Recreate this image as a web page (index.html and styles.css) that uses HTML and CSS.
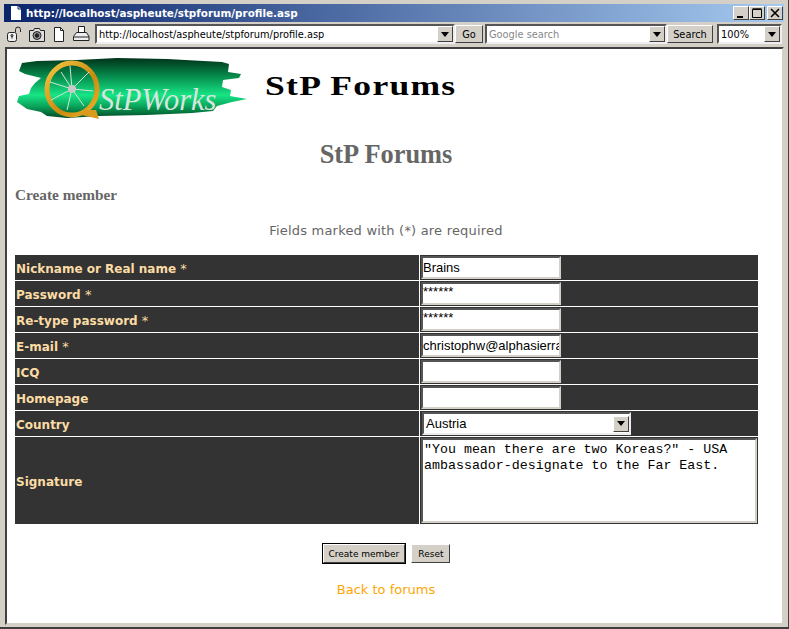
FILE: index.html
```html
<!DOCTYPE html>
<html lang="en">
<head>
  <meta charset="UTF-8">
  <title>StP Forums</title>
  <link rel="stylesheet" href="styles.css">
</head>
<body>

<div class="window">
  <div class="titlebar">
    <svg class="title-icon" width="16" height="16" viewBox="0 0 16 16"><path d="M3 1h7l3 3v11H3z" fill="#fff"/><path d="M10 1v3h3" fill="none" stroke="#0a246a"/></svg>
    <span class="title-text">http://localhost/aspheute/stpforum/profile.asp</span>
    <div class="win-buttons">
      <div class="win-btn"><svg width="10" height="10" viewBox="0 0 10 10"><path d="M1 8h6v2H1z" fill="#000"/></svg></div>
      <div class="win-btn"><svg width="10" height="10" viewBox="0 0 10 10"><path d="M.5 1.5h9v8h-9zM.5.8h9" fill="none" stroke="#000"/></svg></div>
      <div class="win-btn close"><svg width="10" height="10" viewBox="0 0 10 10"><path d="M1 1l8 8M9 1l-8 8" stroke="#000" stroke-width="1.6"/></svg></div>
    </div>
  </div>

  <div class="toolbar">
    <div class="tool-icons">
      <svg width="18" height="18" viewBox="0 0 18 18" fill="none" stroke="#222"><rect x="1.500" y="7.500" width="9" height="9" rx="2" fill="#eee"/><path d="M6 10.500v3"/><circle cx="6" cy="10.500" r="1"/><path d="M9.500 7V4.500a2.500 2.500 0 0 1 5 0V7"/></svg>
      <svg width="18" height="18" viewBox="0 0 18 18" fill="none" stroke="#222"><path d="M1.500 5.500h4l1-2h5l1 2h4v11h-15z" fill="#ddd"/><circle cx="9" cy="10.500" r="4" fill="#999"/><circle cx="9" cy="10.500" r="1.800" fill="#222"/></svg>
      <svg width="18" height="18" viewBox="0 0 18 18" fill="#fff" stroke="#222"><path d="M4.500 2.500h6l3 3v11h-9z"/><path d="M10.500 2.500v3h3" fill="none"/></svg>
      <svg width="18" height="18" viewBox="0 0 18 18" fill="#eee" stroke="#222"><path d="M6.500 1.500h6v6h-6z" fill="#fff"/><path d="M4.500 7.500h10l2.500 4v4H1.500v-4z"/><path d="M2 12h15"/></svg>
    </div>
    <div class="combo address">
      <span class="combo-text">http://localhost/aspheute/stpforum/profile.asp</span>
      <div class="arrow-btn"><i class="arrow"></i></div>
    </div>
    <div class="tool-btn go">Go</div>
    <div class="combo search">
      <span class="combo-text muted">Google search</span>
      <div class="arrow-btn"><i class="arrow"></i></div>
    </div>
    <div class="tool-btn find">Search</div>
    <div class="combo zoom">
      <span class="combo-text">100%</span>
      <div class="arrow-btn"><i class="arrow"></i></div>
    </div>
  </div>

  <div class="content">
    <div class="banner">
      <svg class="logo" width="232" height="64" viewBox="0 0 232 64">
        <defs>
          <linearGradient id="brush" x1="0" y1="0" x2="0" y2="1">
            <stop offset="0" stop-color="#00331a"/>
            <stop offset=".3" stop-color="#068a4c"/>
            <stop offset=".62" stop-color="#17e585"/>
            <stop offset=".8" stop-color="#0aa55c"/>
            <stop offset="1" stop-color="#004a24"/>
          </linearGradient>
          <linearGradient id="gold" x1="0" y1="0" x2="1" y2="1">
            <stop offset="0" stop-color="#f5c542"/>
            <stop offset=".6" stop-color="#c98a10"/>
            <stop offset="1" stop-color="#f0b52c"/>
          </linearGradient>
        </defs>
        <path d="M5 7 20 5 60 4 100 2 150 3 205 6 212 8 211 16 224 18 222 22 206 24 205 31 214 34 213 40 230 43 215 46 200 50 196 55 175 57 130 59 82 60 50 62 30 60 24 56 10 53 0 46 2 40 12 38 14 32 18 27 24 22 8 18 2 15z" fill="url(#brush)"/>
        <ellipse cx="55" cy="33" rx="25" ry="26" fill="none" stroke="url(#gold)" stroke-width="5"/>
        <path d="M60 58 82 63 79 54 68 54z" fill="#d99b1c"/>
        <path d="M55 33 44 16M55 33 72 16M55 33 34 44M55 33 67 50M55 33 76 35M55 33 53 10M55 33 50 54M55 33 33 26" stroke="#cfe6dc" stroke-width="1"/>
        <circle cx="55" cy="33" r="4" fill="#c9c9c9"/>
        <text class="logo-text" x="82" y="54">StPWorks</text>
      </svg>
      <svg class="wordmark" width="200" height="32" viewBox="0 0 200 32">
        <text class="wordmark-text" x="0" y="25" transform="scale(1.27 1)">StP Forums</text>
      </svg>
    </div>

    <h1 class="page-title">StP Forums</h1>
    <h2 class="section-title">Create member</h2>
    <p class="note">Fields marked with (*) are required</p>

    <table class="member-form">
      <tr>
        <td class="label">Nickname or Real name <span class="star">*</span></td>
        <td class="field"><input class="text-input" type="text" value="Brains"></td>
      </tr>
      <tr>
        <td class="label">Password <span class="star">*</span></td>
        <td class="field"><input class="text-input secret" type="text" value="******"></td>
      </tr>
      <tr>
        <td class="label">Re-type password <span class="star">*</span></td>
        <td class="field"><input class="text-input secret" type="text" value="******"></td>
      </tr>
      <tr>
        <td class="label">E-mail <span class="star">*</span></td>
        <td class="field"><input class="text-input" type="text" value="christophw@alphasierrapapa.com"></td>
      </tr>
      <tr>
        <td class="label">ICQ</td>
        <td class="field"><input class="text-input" type="text"></td>
      </tr>
      <tr>
        <td class="label">Homepage</td>
        <td class="field"><input class="text-input" type="text"></td>
      </tr>
      <tr>
        <td class="label">Country</td>
        <td class="field">
          <div class="combo country">
            <span class="combo-text">Austria</span>
            <div class="arrow-btn"><i class="arrow"></i></div>
          </div>
        </td>
      </tr>
      <tr class="tall">
        <td class="label">Signature</td>
        <td class="field"><textarea class="signature">"You mean there are two Koreas?" - USA ambassador-designate to the Far East.</textarea></td>
      </tr>
    </table>

    <div class="actions">
      <button class="form-btn primary">Create member</button>
      <button class="form-btn">Reset</button>
    </div>
    <a class="back-link" href="#">Back to forums</a>
  </div>
</div>

</body>
</html>
```

FILE: styles.css
```css
html, body {
  margin: 0;
  height: 100%;
}

body {
  background-color: #d4d0c8;
  overflow: hidden;
}

.window {
  box-sizing: border-box;
  height: 629px;
  padding: 4px 4px 2px 4px;
  border-bottom: 2px solid #404040;
  border-right: 1px solid #404040;
  display: flex;
  flex-direction: column;
}

/* title bar */
.titlebar {
  height: 18px;
  flex: none;
  display: flex;
  align-items: center;
  padding-left: 4px;
  background: linear-gradient(to right, #0a246a, #a6caf0);
}

.title-icon {
  flex: none;
  margin-right: 2px;
}

.title-text {
  font-family: "DejaVu Sans", sans-serif;
  font-size: 10.4px;
  font-weight: bold;
  color: #fff;
}

.win-buttons {
  margin-left: auto;
  margin-right: 1px;
  display: flex;
}

.win-btn {
  box-sizing: border-box;
  width: 16px;
  height: 14px;
  display: flex;
  align-items: center;
  justify-content: center;
  background-color: #d4d0c8;
  border: 1px solid;
  border-color: #fff #404040 #404040 #fff;
}

.win-btn.close {
  margin-left: 2px;
}

/* toolbar */
.toolbar {
  height: 22px;
  flex: none;
  margin-top: 1px;
  display: flex;
  align-items: center;
  font-family: "DejaVu Sans", sans-serif;
  font-size: 9.800px;
}

.tool-icons {
  width: 90px;
  flex: none;
  padding-left: 2px;
  box-sizing: border-box;
  display: flex;
  gap: 4px;
}

.combo {
  box-sizing: border-box;
  height: 20px;
  display: flex;
  align-items: center;
  background-color: #fff;
  border: 2px solid;
  border-color: #555 #eee #eee #555;
}

.combo-text {
  flex: 1;
  padding-left: 2px;
  white-space: nowrap;
  overflow: hidden;
}

.muted {
  color: #888;
}

.arrow-btn {
  box-sizing: border-box;
  width: 16px;
  height: 16px;
  flex: none;
  display: flex;
  align-items: center;
  justify-content: center;
  background-color: #d4d0c8;
  border: 1px solid;
  border-color: #fff #404040 #404040 #fff;
}

.arrow {
  width: 0;
  height: 0;
  border: 4px solid transparent;
  border-top: 5px solid #000;
  border-bottom: 0;
}

.address {
  width: 360px;
  margin-left: 1px;
}

.search {
  width: 182px;
  margin-left: 2px;
}

.zoom {
  width: 65px;
  margin-left: 4px;
}

.tool-btn {
  box-sizing: border-box;
  height: 18px;
  display: flex;
  align-items: center;
  justify-content: center;
  background-color: #d4d0c8;
  border: 1px solid;
  border-color: #fff #404040 #404040 #fff;
}

.go {
  width: 28px;
}

.find {
  width: 46px;
}

/* page */
.content {
  flex: 1;
  margin: 2px 0 0 1px;
  padding: 0 25px 0 8px;
  background-color: #fff;
  border: 2px solid;
  border-color: #404040 #d4d0c8 #d4d0c8 #404040;
  overflow: hidden;
}

.banner {
  height: 77px;
  display: flex;
  align-items: flex-start;
  padding-top: 7px;
  box-sizing: border-box;
}

.logo {
  flex: none;
  margin-left: 2px;
}

.logo-text {
  font-family: "Liberation Serif", serif;
  font-style: italic;
  font-size: 30.500px;
  fill: #d5e6dd;
}

.wordmark {
  flex: none;
  margin-left: 16px;
  margin-top: 14px;
}

.wordmark-text {
  font-family: "Liberation Serif", serif;
  font-weight: bold;
  font-size: 28px;
  letter-spacing: 1px;
  fill: #000;
}

.page-title {
  margin: 12px 0 0 0;
  font-family: "Liberation Serif", serif;
  font-size: 26.400px;
  line-height: 32px;
  color: #666;
  text-align: center;
}

.section-title {
  margin: 16px 0 0 0;
  font-family: "Liberation Serif", serif;
  font-size: 15.300px;
  line-height: 18px;
  color: #666;
}

.note {
  margin: 18px 0 0 0;
  font-family: "DejaVu Sans", sans-serif;
  font-size: 13px;
  line-height: 18px;
  letter-spacing: .2px;
  color: #666;
  text-align: center;
}

/* form table */
.member-form {
  width: 745px;
  margin: 14px 0 0 -1px;
  border-collapse: separate;
  border-spacing: 1px;
  table-layout: fixed;
}

.member-form tr {
  height: 25px;
}

.member-form tr.tall {
  height: 87px;
}

.label {
  width: 403px;
  padding: 2px 0 0 1px;
  background-color: #333;
  color: #fbdca5;
  font-family: "DejaVu Sans", sans-serif;
  font-size: 12px;
  font-weight: bold;
}

.star {
  font-weight: normal;
  font-size: 13px;
}

.field {
  padding: 0 0 0 1px;
  background-color: #333;
}

.text-input {
  display: block;
  box-sizing: border-box;
  width: 140px;
  height: 23px;
  margin: 0;
  padding: 0;
  background-color: #fff;
  border: 2px solid;
  border-color: #555 #d4d0c8 #d4d0c8 #555;
  font-family: "Liberation Sans", sans-serif;
  font-size: 13px;
  color: #000;
}

.secret {
  padding-bottom: 5px;
}

.country {
  width: 209px;
  height: 23px;
  margin-left: 1px;
  font-family: "Liberation Sans", sans-serif;
  font-size: 13px;
}

.country .combo-text {
  padding-left: 2px;
}

.signature {
  display: block;
  box-sizing: border-box;
  width: 336px;
  height: 85px;
  margin: 0;
  padding: 2px 0 2px 1px;
  resize: none;
  overflow: hidden;
  background-color: #fff;
  border: 2px solid;
  border-color: #555 #d4d0c8 #d4d0c8 #555;
  outline: 1px solid #333;
  font-family: "Liberation Mono", monospace;
  font-size: 13.300px;
  line-height: 16px;
  color: #000;
}

/* buttons */
.actions {
  margin-top: 19px;
  padding-left: 1px;
  display: flex;
  justify-content: center;
  gap: 6px;
}

.form-btn {
  height: 19px;
  padding: 0 6px;
  background-color: #d4d0c8;
  border: 1px solid;
  border-color: #fff #404040 #404040 #fff;
  font-family: "DejaVu Sans", sans-serif;
  font-size: 9px;
  color: #000;
}

.form-btn.primary {
  padding: 0 5px;
  outline: 1px solid #000;
}

.back-link {
  display: block;
  margin-top: 18px;
  font-family: "DejaVu Sans", sans-serif;
  font-size: 13px;
  line-height: 18px;
  color: #ffa500;
  text-align: center;
  text-decoration: none;
}
```
